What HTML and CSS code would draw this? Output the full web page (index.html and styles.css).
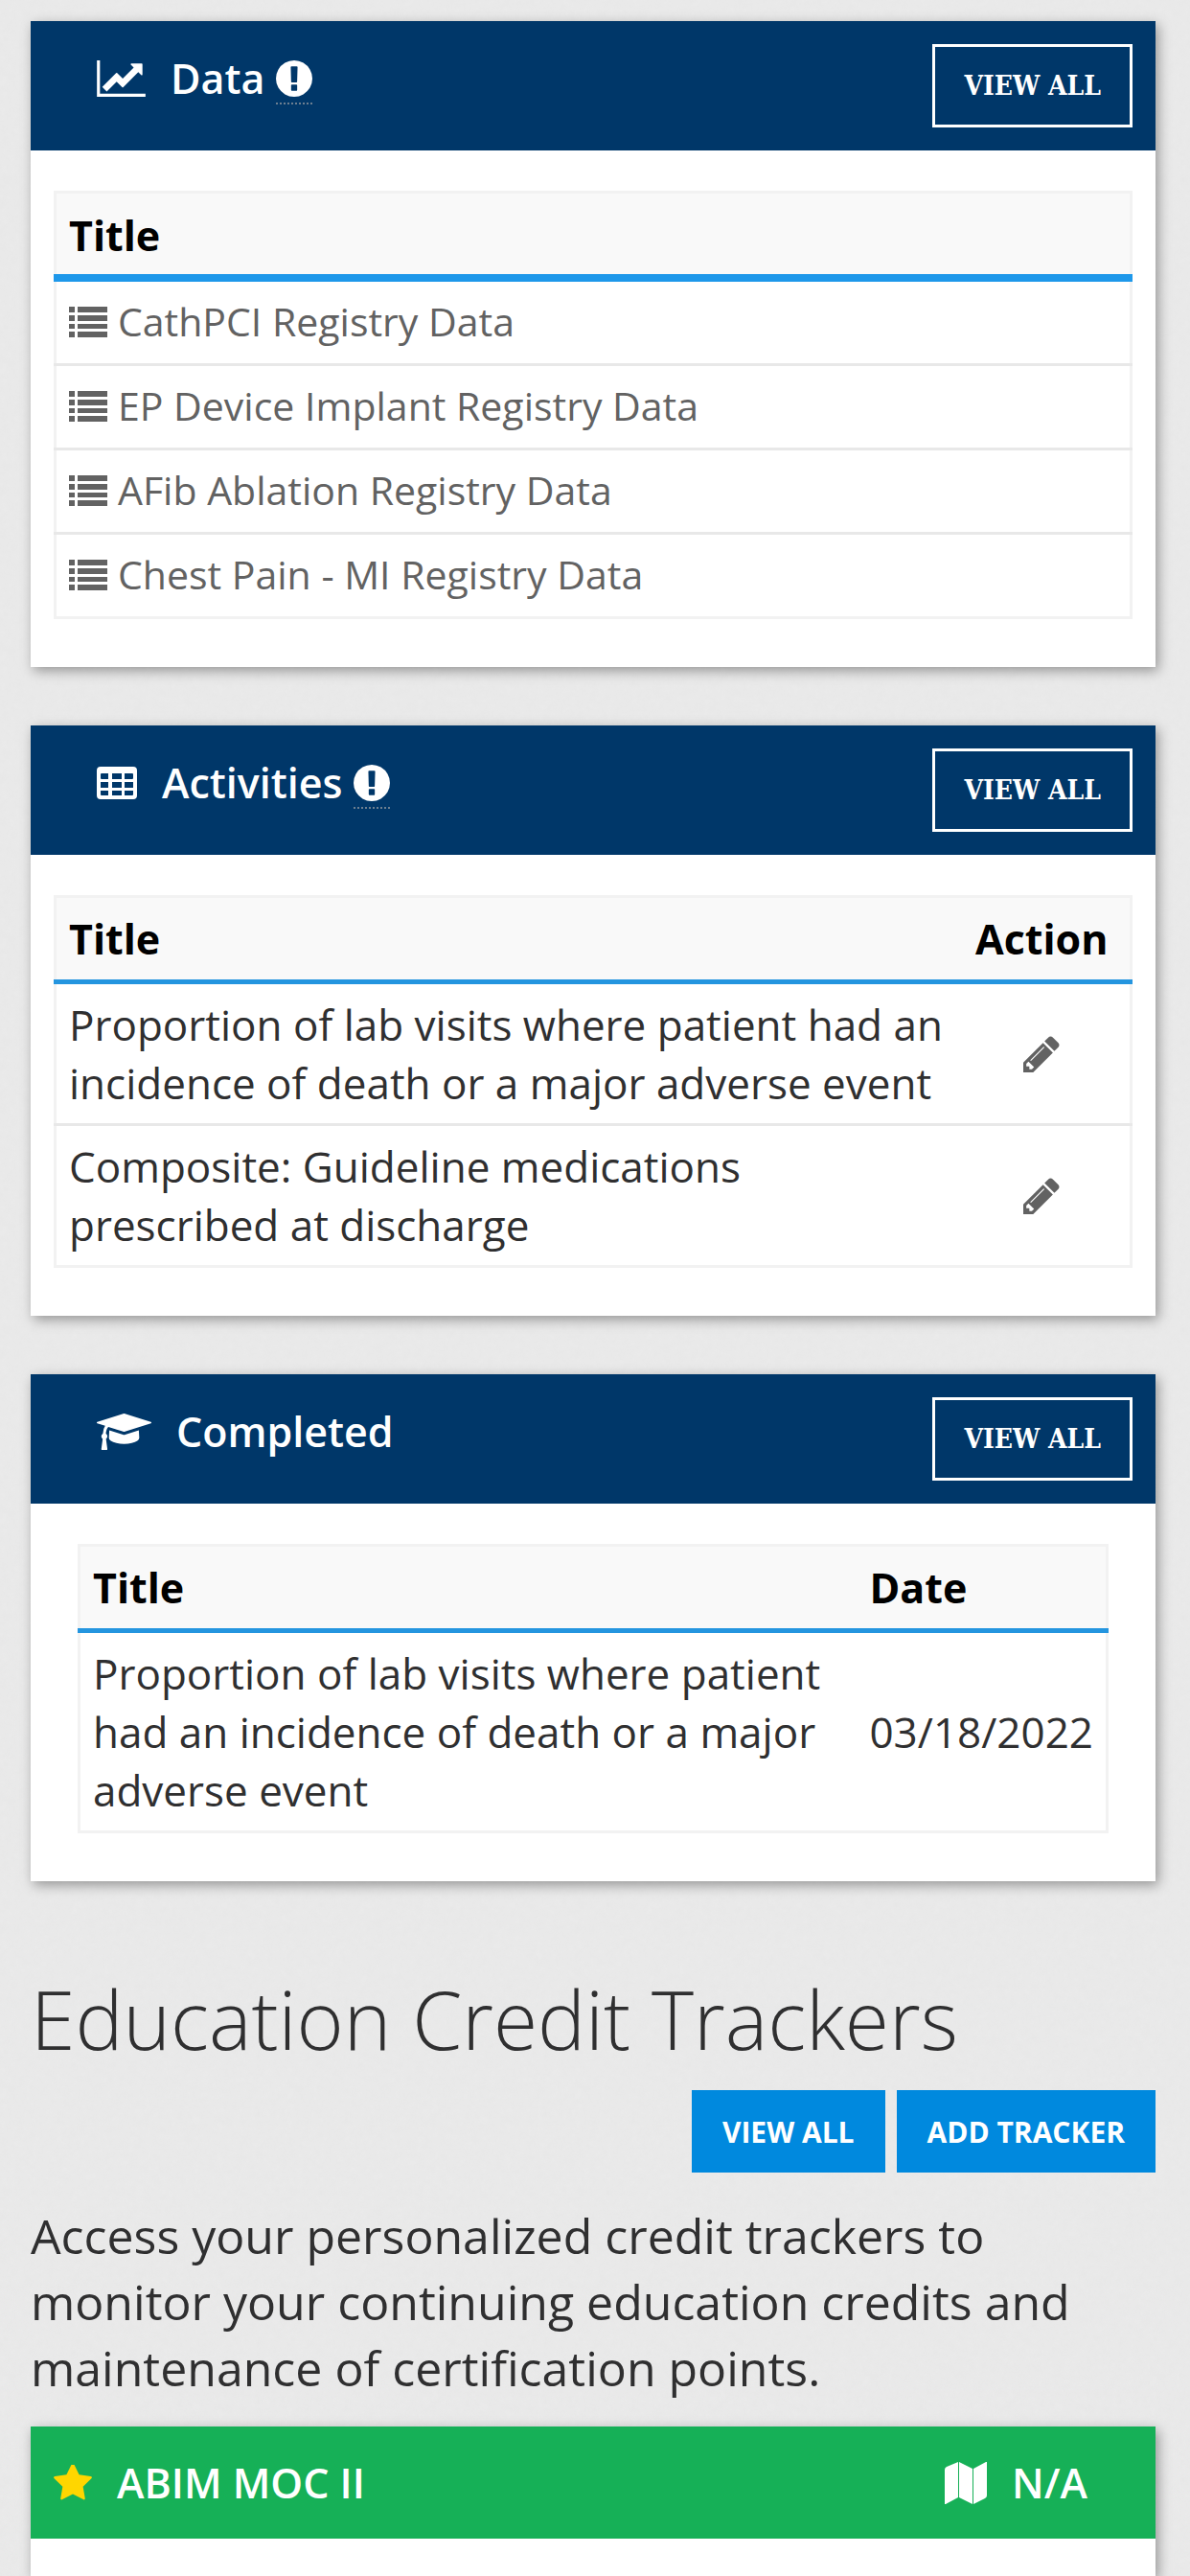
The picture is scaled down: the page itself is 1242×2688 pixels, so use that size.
FILE: index.html
```html
<!DOCTYPE html>
<html lang="en">
<head>
<meta charset="utf-8">
<meta name="viewport" content="width=device-width">
<title>Education Credit Trackers</title>
<link rel="stylesheet" href="styles.css">
</head>
<body>
<svg class="sprite" aria-hidden="true">
  <symbol id="chart" viewBox="0 128 2048 1536"><path d="M2048 1536v128h-2048v-1536h128v1408h1920zM1920 288v435q0 21-19.5 29.5t-35.5-7.5l-121-121-633 633q-10 10-23 10t-23-10l-233-233-416 416-192-192 585-585q10-10 23-10t23 10l233 233 464-464-121-121q-16-16-7.5-35.5t29.5-19.5h435q14 0 23 9t9 23z"/></symbol>
  <symbol id="alert" viewBox="128 128 1536 1536"><path d="M896 128q209 0 385.5 103t279.5 279.5 103 385.5-103 385.5-279.5 279.5-385.5 103-385.5-103-279.5-279.5-103-385.5 103-385.5 279.5-279.5 385.5-103zm128 1247v-190q0-14-9-23.5t-22-9.5h-192q-13 0-23 10t-10 23v190q0 13 10 23t23 10h192q13 0 22-9.5t9-23.5zm-2-344l18-621q0-12-10-18-10-8-24-8h-220q-14 0-24 8-10 6-10 18l17 621q0 10 10 17.5t24 7.5h185q14 0 23.5-7.5t10.5-17.5z"/></symbol>
  <symbol id="grid" viewBox="0 0 42 34"><path fill-rule="evenodd" d="M4 0h34q4 0 4 4v26q0 4-4 4H4q-4 0-4-4V4q0-4 4-4zM4 8v4q0 1 1 1h7V7H5Q4 7 4 8zM16 7v6h10V7zM29 7v6h8q1 0 1-1V8q0-1-1-1zM4 16v6h8v-6zM16 16v6h10v-6zM29 16v6h9v-6zM4 25v4q0 1 1 1h7v-5zM16 25v5h10v-5zM29 25v5h8q1 0 1-1v-4z"/></symbol>
  <symbol id="cap" viewBox="0 128 2304 1536"><path d="M1774 836l18 316q4 69-82 128t-235 93.5-323 34.5-323-34.5-235-93.5-82-128l18-316 574 181q22 7 48 7t48-7zM2304 512q0 23-22 31l-1120 352q-4 1-10 1t-10-1l-652-206q-43 34-71 111.5t-34 178.5q63 36 63 109 0 69-58 107l58 433q2 14-8 25-9 11-24 11h-192q-15 0-24-11-10-11-8-25l58-433q-58-38-58-107 0-73 65-111 11-207 98-330l-333-104q-22-8-22-31t22-31l1120-352q4-1 10-1t10 1l1120 352q22 8 22 31z"/></symbol>
  <symbol id="list" viewBox="0 0 40 32"><path d="M0 0h6v6H0zM9 0h31v6H9zM0 9h6v6H0zM9 9h31v6H9zM0 18h6v5H0zM9 18h31v5H9zM0 26h6v6H0zM9 26h31v6H9z"/></symbol>
  <symbol id="pencil" viewBox="128 128 1536 1536"><path d="M491 1536l91-91-235-235-91 91v107h128v128h107zm523-928q0-22-22-22-10 0-17 7l-542 542q-7 7-7 17 0 22 22 22 10 0 17-7l542-542q7-7 7-17zm-54-192l416 416-832 832h-416v-416zm683 96q0 53-37 90l-166 166-416-416 166-165q36-38 90-38 53 0 91 38l235 234q37 39 37 91z"/></symbol>
  <symbol id="star" viewBox="64 128 1664 1536"><path d="M1728 647q0 22-26 48l-363 354 86 500q1 7 1 20 0 21-10.5 35.5t-30.5 14.5q-19 0-40-12l-449-236-449 236q-22 12-40 12-21 0-31.5-14.5t-10.5-35.5q0-6 2-20l86-500-364-354q-25-27-25-48 0-37 56-46l502-73 225-455q19-41 49-41t49 41l225 455 502 73q56 9 56 46z"/></symbol>
  <symbol id="map" viewBox="0 0 44 44"><path d="M0 8Q0 6 2 5L14 0V37L1 44H0zM15 0L29 7V44L15 37zM30 7L43 0h1V35Q44 37 42 38L30 44z"/></symbol>
</svg>
<main class="page">
  <section class="card">
    <header class="card-head">
      <h2 class="card-title"><svg class="icon icon-chart"><use href="#chart"/></svg><span>Data</span><span class="hint"><svg><use href="#alert"/></svg></span></h2>
      <button class="outline-btn" type="button">VIEW ALL</button>
    </header>
    <div class="card-body">
      <table class="list list-links">
        <thead><tr><th>Title</th></tr></thead>
        <tbody>
          <tr><td><a href="#"><svg class="icon-list"><use href="#list"/></svg>CathPCI Registry Data</a></td></tr>
          <tr><td><a href="#"><svg class="icon-list"><use href="#list"/></svg>EP Device Implant Registry Data</a></td></tr>
          <tr><td><a href="#"><svg class="icon-list"><use href="#list"/></svg>AFib Ablation Registry Data</a></td></tr>
          <tr><td><a href="#"><svg class="icon-list"><use href="#list"/></svg>Chest Pain - MI Registry Data</a></td></tr>
        </tbody>
      </table>
    </div>
  </section>

  <section class="card">
    <header class="card-head">
      <h2 class="card-title"><svg class="icon icon-grid"><use href="#grid"/></svg><span>Activities</span><span class="hint"><svg><use href="#alert"/></svg></span></h2>
      <button class="outline-btn" type="button">VIEW ALL</button>
    </header>
    <div class="card-body">
      <table class="list">
        <thead><tr><th>Title</th><th class="col-action">Action</th></tr></thead>
        <tbody>
          <tr><td class="col-title">Proportion of lab visits where patient had an<br>incidence of death or a major adverse event</td><td class="col-action"><button class="edit-btn" type="button" aria-label="Edit"><svg><use href="#pencil"/></svg></button></td></tr>
          <tr><td class="col-title">Composite: Guideline medications<br>prescribed at discharge</td><td class="col-action"><button class="edit-btn" type="button" aria-label="Edit"><svg><use href="#pencil"/></svg></button></td></tr>
        </tbody>
      </table>
    </div>
  </section>

  <section class="card">
    <header class="card-head">
      <h2 class="card-title"><svg class="icon icon-cap"><use href="#cap"/></svg><span>Completed</span></h2>
      <button class="outline-btn" type="button">VIEW ALL</button>
    </header>
    <div class="card-body card-body-inset">
      <table class="list">
        <thead><tr><th>Title</th><th class="col-date">Date</th></tr></thead>
        <tbody>
          <tr><td class="col-title">Proportion of lab visits where patient<br>had an incidence of death or a major<br>adverse event</td><td class="col-date">03/18/2022</td></tr>
        </tbody>
      </table>
    </div>
  </section>

  <section class="trackers">
    <h1 class="heading">Education Credit Trackers</h1>
    <div class="actions">
      <button class="solid-btn" type="button">VIEW ALL</button>
      <button class="solid-btn" type="button">ADD TRACKER</button>
    </div>
    <p class="intro">Access your personalized credit trackers to<br>monitor your continuing education credits and<br>maintenance of certification points.</p>
    <article class="card tracker">
      <header class="tracker-head">
        <svg class="icon-star"><use href="#star"/></svg>
        <h3 class="tracker-name">ABIM MOC II</h3>
        <svg class="icon-map"><use href="#map"/></svg>
        <span>N/A</span>
      </header>
    </article>
  </section>
</main>
</body>
</html>
```

FILE: styles.css
```css
* { box-sizing: border-box; }

body {
  margin: 0;
  background-color: #eaeaea;
  /* faint paper grain */
  background-image: url("data:image/svg+xml,%3Csvg xmlns='http://www.w3.org/2000/svg' width='300' height='300'%3E%3Cfilter id='n'%3E%3CfeTurbulence type='fractalNoise' baseFrequency='.12' numOctaves='3' stitchTiles='stitch'/%3E%3CfeColorMatrix type='saturate' values='0'/%3E%3C/filter%3E%3Crect width='300' height='300' filter='url(%23n)' opacity='.04'/%3E%3C/svg%3E");
  color: #2f2f30;
  font-family: "Open Sans", "Noto Sans", sans-serif;
  font-size: 44px;
  line-height: 61px;
  overflow-x: hidden;
}

.sprite { display: none; }
svg { display: block; fill: currentColor; flex: none; }
button { font: inherit; border: 0; border-radius: 0; cursor: pointer; }

.page {
  display: flex;
  flex-direction: column;
  min-height: 100vh;
  padding: 22px 36px 0 32px;
}

.card {
  margin-bottom: 61px;
  background: #fff;
  box-shadow: 3px 4px 12px rgba(0, 0, 0, 0.36);
}

.card-head {
  display: flex;
  justify-content: space-between;
  align-items: flex-start;
  padding: 24px 24px 24px 69px;
  background: #003769;
  color: #fff;
}

.card-title {
  display: flex;
  align-items: center;
  margin: 6px 0 0;
  font-size: 43px;
  font-weight: 600;
  line-height: 60px;
}

.icon { margin-right: 26px; }
.icon-chart { width: 51px; height: 38px; }
.icon-grid { width: 42px; height: 34px; }
.icon-cap { width: 57px; height: 38px; }

.hint {
  margin: 8px 0 0 12px;
  padding-bottom: 6px;
  border-bottom: 2px dotted #6d7f91;
}
.hint svg { width: 38px; height: 38px; }

.outline-btn {
  height: 87px;
  padding: 0 30px;
  border: 3px solid #fff;
  background: transparent;
  color: #fff;
  font-family: "Roboto Slab", "DejaVu Serif Condensed", "DejaVu Serif", serif;
  font-size: 28px;
  font-weight: 700;
}

.card-body { padding: 42px 24px 50px; }
.card-body-inset { padding: 42px 49px 50px; }

.list {
  width: 100%;
  border: 3px solid #f2f2f2;
  border-collapse: collapse;
}
.list th {
  padding: 12px 13px;
  border-bottom: 5px solid #2495df;
  background: #f9f9f9;
  color: #000;
  font-size: 43px;
  font-weight: 700;
  text-align: left;
}
.list td {
  padding: 12px 13px 11px;
  border-bottom: 3px solid #e8e8e8;
}
.list tr:last-child td { border-bottom-color: #f2f2f2; }
.list .col-title { padding-right: 0; }
.list .col-action { width: 185px; text-align: center; }
.list .col-date { width: 260px; white-space: nowrap; }

.list-links th { padding: 13px 13px 10px; border-bottom: 8px solid #1e98ea; }
.list-links td { padding: 11px 13px 13px; font-size: 41px; }
.list a {
  display: flex;
  align-items: center;
  gap: 11px;
  color: #626262;
  text-decoration: none;
}
.icon-list { width: 40px; height: 32px; }

.edit-btn { display: block; margin: 0 auto; padding: 0; background: transparent; color: #626262; }
.edit-btn svg { width: 38px; height: 38px; }

.trackers { display: flex; flex: 1; flex-direction: column; }

.heading {
  margin: 23px 0 14px;
  font-size: 84px;
  font-weight: 300;
  line-height: 120px;
}

.actions { display: flex; justify-content: flex-end; gap: 12px; }
.solid-btn {
  height: 86px;
  padding: 0 32px;
  background: #0089de;
  color: #fff;
  font-size: 30px;
  font-weight: 700;
}

.intro { margin: 32px 0 26px; font-size: 50px; line-height: 69px; }

.tracker { flex: 1; margin-bottom: 0; }
.tracker-head {
  display: flex;
  align-items: center;
  padding: 28px 71px 28px 24px;
  background: #16b057;
  color: #fff;
  font-size: 43px;
  font-weight: 600;
}
.tracker-name { flex: 1; margin: 0 0 0 26px; font-size: 43px; font-weight: 600; }
.icon-star { width: 40px; height: 38px; color: #ffd600; }
.icon-map { width: 44px; height: 44px; margin-right: 26px; }
```
